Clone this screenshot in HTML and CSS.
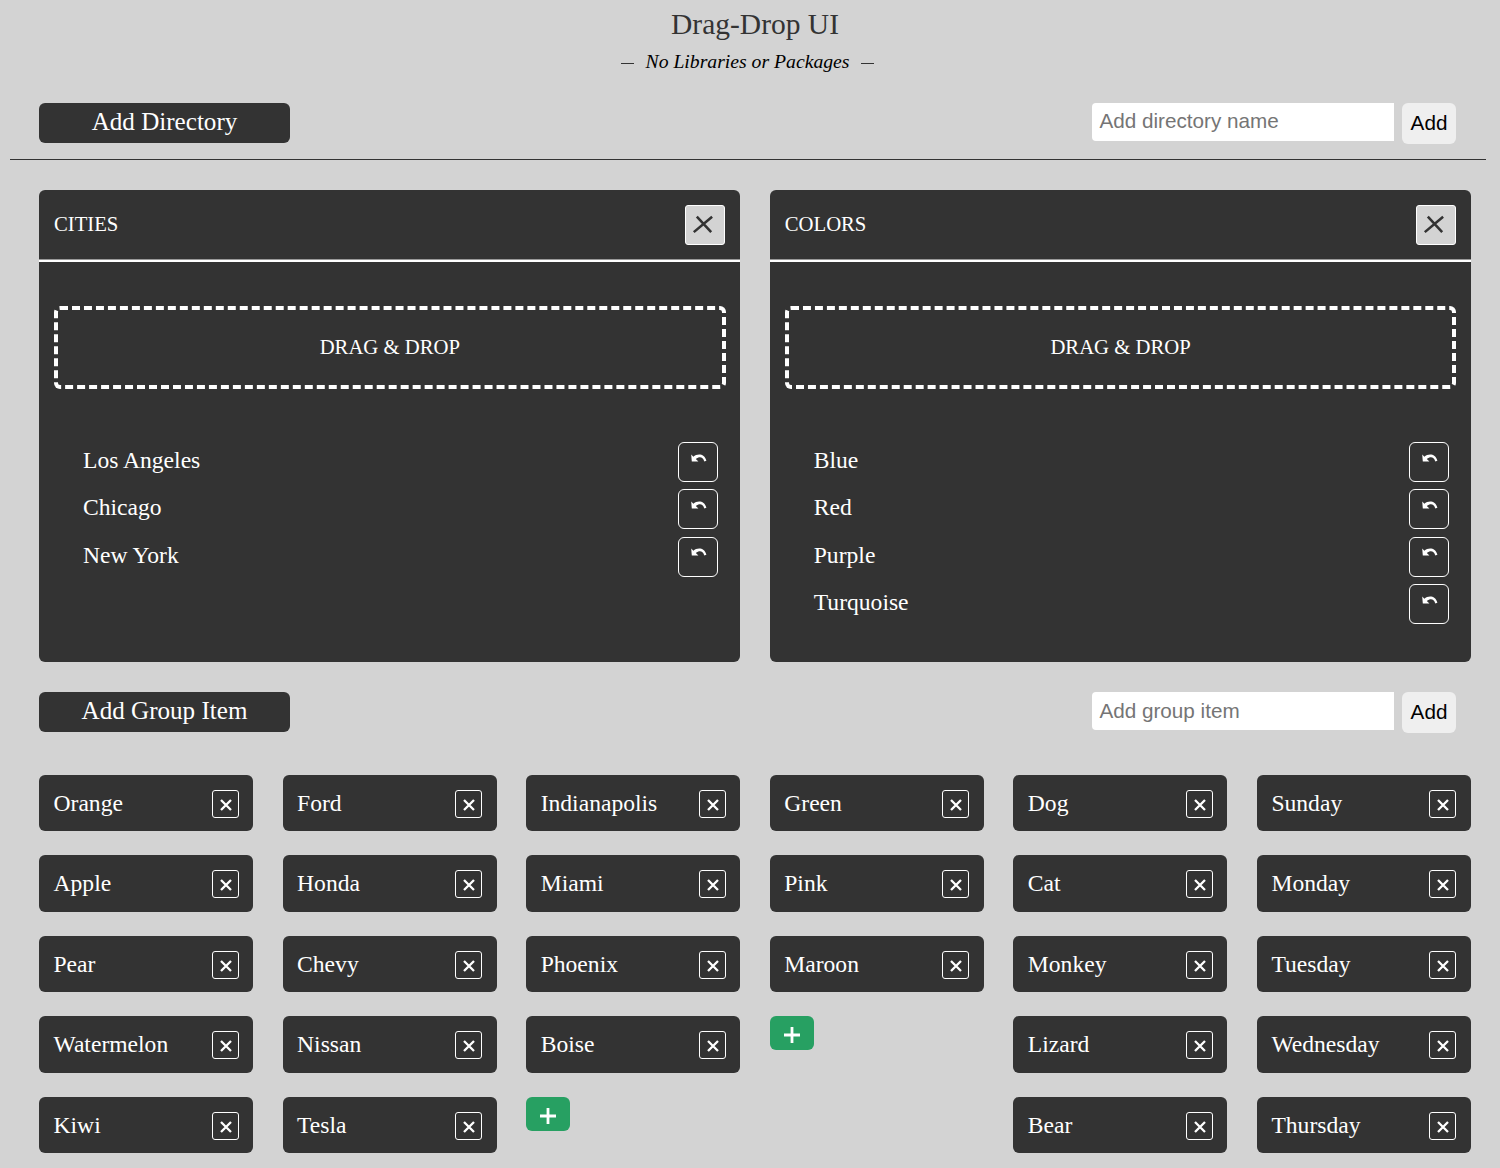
FILE: index.html
```html
<!DOCTYPE html>
<html lang="en">
<head>
<meta charset="utf-8">
<title>Drag-Drop UI</title>
<link rel="stylesheet" href="styles.css">
</head>
<body>
<svg class="symbols" aria-hidden="true">
  <symbol id="close" viewBox="0 0 40 40"><path d="M11.4 11.300 26.500 27.500M27.500 11.300 8.200 27.500"/></symbol>
  <symbol id="times" viewBox="0 0 14 14"><path d="M2 2 12 12M12 2 2 12"/></symbol>
  <symbol id="plus" viewBox="0 0 16 16"><path d="M8 0V16M0 8H16"/></symbol>
  <symbol id="undo" viewBox="0 0 16 8"><path d="M.2 .5 2.400 2.700C6-.6 13.500-1 15.400 6.800L13.300 7.500C11.800 2.700 8.500 2.200 4.800 4.900L7.400 7.600 .8 7.500Z"/></symbol>
</svg>
<header class="header">
  <h1 class="title">Drag-Drop UI</h1>
  <p class="subtitle"><span class="dash"></span><em>No Libraries or Packages</em><span class="dash"></span></p>
</header>
<section class="toolbar toolbar-directory">
  <h2 class="label">Add Directory</h2>
  <form class="form"><input class="field" type="text" placeholder="Add directory name"><button class="add" type="button">Add</button></form>
</section>
<main class="directories">
  <section class="directory">
    <header class="directory-head"><h3 class="caps">CITIES</h3><button class="close" type="button"><svg><use href="#close"/></svg></button></header>
    <div class="drop caps">DRAG &amp; DROP</div>
    <ul class="list">
      <li class="entry">Los Angeles<button class="undo" type="button"><svg><use href="#undo"/></svg></button></li>
      <li class="entry">Chicago<button class="undo" type="button"><svg><use href="#undo"/></svg></button></li>
      <li class="entry">New York<button class="undo" type="button"><svg><use href="#undo"/></svg></button></li>
    </ul>
  </section>
  <section class="directory">
    <header class="directory-head"><h3 class="caps">COLORS</h3><button class="close" type="button"><svg><use href="#close"/></svg></button></header>
    <div class="drop caps">DRAG &amp; DROP</div>
    <ul class="list">
      <li class="entry">Blue<button class="undo" type="button"><svg><use href="#undo"/></svg></button></li>
      <li class="entry">Red<button class="undo" type="button"><svg><use href="#undo"/></svg></button></li>
      <li class="entry">Purple<button class="undo" type="button"><svg><use href="#undo"/></svg></button></li>
      <li class="entry">Turquoise<button class="undo" type="button"><svg><use href="#undo"/></svg></button></li>
    </ul>
  </section>
</main>
<section class="toolbar toolbar-group">
  <h2 class="label">Add Group Item</h2>
  <form class="form"><input class="field" type="text" placeholder="Add group item"><button class="add" type="button">Add</button></form>
</section>
<section class="groups">
  <div class="group">
    <div class="item">Orange<button class="remove" type="button"><svg><use href="#times"/></svg></button></div>
    <div class="item">Apple<button class="remove" type="button"><svg><use href="#times"/></svg></button></div>
    <div class="item">Pear<button class="remove" type="button"><svg><use href="#times"/></svg></button></div>
    <div class="item">Watermelon<button class="remove" type="button"><svg><use href="#times"/></svg></button></div>
    <div class="item">Kiwi<button class="remove" type="button"><svg><use href="#times"/></svg></button></div>
  </div>
  <div class="group">
    <div class="item">Ford<button class="remove" type="button"><svg><use href="#times"/></svg></button></div>
    <div class="item">Honda<button class="remove" type="button"><svg><use href="#times"/></svg></button></div>
    <div class="item">Chevy<button class="remove" type="button"><svg><use href="#times"/></svg></button></div>
    <div class="item">Nissan<button class="remove" type="button"><svg><use href="#times"/></svg></button></div>
    <div class="item">Tesla<button class="remove" type="button"><svg><use href="#times"/></svg></button></div>
  </div>
  <div class="group">
    <div class="item">Indianapolis<button class="remove" type="button"><svg><use href="#times"/></svg></button></div>
    <div class="item">Miami<button class="remove" type="button"><svg><use href="#times"/></svg></button></div>
    <div class="item">Phoenix<button class="remove" type="button"><svg><use href="#times"/></svg></button></div>
    <div class="item">Boise<button class="remove" type="button"><svg><use href="#times"/></svg></button></div>
    <button class="plus" type="button"><svg><use href="#plus"/></svg></button>
  </div>
  <div class="group">
    <div class="item">Green<button class="remove" type="button"><svg><use href="#times"/></svg></button></div>
    <div class="item">Pink<button class="remove" type="button"><svg><use href="#times"/></svg></button></div>
    <div class="item">Maroon<button class="remove" type="button"><svg><use href="#times"/></svg></button></div>
    <button class="plus" type="button"><svg><use href="#plus"/></svg></button>
  </div>
  <div class="group">
    <div class="item">Dog<button class="remove" type="button"><svg><use href="#times"/></svg></button></div>
    <div class="item">Cat<button class="remove" type="button"><svg><use href="#times"/></svg></button></div>
    <div class="item">Monkey<button class="remove" type="button"><svg><use href="#times"/></svg></button></div>
    <div class="item">Lizard<button class="remove" type="button"><svg><use href="#times"/></svg></button></div>
    <div class="item">Bear<button class="remove" type="button"><svg><use href="#times"/></svg></button></div>
  </div>
  <div class="group">
    <div class="item">Sunday<button class="remove" type="button"><svg><use href="#times"/></svg></button></div>
    <div class="item">Monday<button class="remove" type="button"><svg><use href="#times"/></svg></button></div>
    <div class="item">Tuesday<button class="remove" type="button"><svg><use href="#times"/></svg></button></div>
    <div class="item">Wednesday<button class="remove" type="button"><svg><use href="#times"/></svg></button></div>
    <div class="item">Thursday<button class="remove" type="button"><svg><use href="#times"/></svg></button></div>
  </div>
</section>
</body>
</html>
```
FILE: styles.css
```css
* { box-sizing: border-box; }

body {
  margin: 0;
  padding: 8px 14px 0 10px;
  height: 1168px;
  overflow: hidden;
  background: #d3d3d3;
  color: #333;
  font-family: "Liberation Serif", "Times New Roman", serif;
  font-size: 23.6px;
}

h1, h2, h3, p, ul { margin: 0; padding: 0; font-weight: normal; }
button { padding: 0; border: 0; font: inherit; }
svg { display: block; overflow: visible; fill: none; stroke: currentColor; }
.symbols { display: none; }

.header {
  height: 94px;
  padding-left: 14px;
  text-align: center;
}
.title { font-size: 29.5px; line-height: 32px; }
.subtitle {
  display: flex;
  justify-content: center;
  align-items: center;
  gap: 11.500px;
  margin-top: 10px;
  padding-right: 15px;
  color: #000;
  font-size: 19.7px;
  line-height: 22px;
}
.dash {
  width: 13.500px;
  height: 1px;
  margin-top: 4px;
  background: #333;
}

.toolbar {
  display: flex;
  justify-content: space-between;
  align-items: flex-start;
  padding: 0 30px 0 29px;
}
.toolbar-directory { height: 58px; border-bottom: 1.5px solid #333; }
.toolbar-group { height: 82.500px; }
.label {
  width: 251px;
  height: 40px;
  margin-top: .5px;
  border-radius: 6px;
  background: #333;
  color: #fff;
  font-size: 25.1px;
  line-height: 37.500px;
  text-align: center;
}
.form { display: flex; align-items: flex-start; gap: 8px; }
.field, .add { font-family: "Liberation Sans", Arial, sans-serif; font-size: 20.7px; }
.field {
  width: 302px;
  height: 38px;
  margin-top: .7px;
  padding: 0 7.400px;
  border: 0;
  border-radius: 4px 0 0 4px;
  background: #fff;
}
.field::placeholder { color: #757575; }
.add {
  width: 54px;
  height: 41px;
  margin-top: .8px;
  border-radius: 6px;
  background: #efefef;
  color: #000;
}
.toolbar-group .label,
.toolbar-group .field,
.toolbar-group .add { margin-top: 0; }
.toolbar-group .add { padding-bottom: 1px; }
.toolbar-directory .field { padding-bottom: 1px; }

.directories {
  display: grid;
  grid-template-columns: 1fr 1fr;
  gap: 29.500px;
  padding: 30px 15px 30px 29px;
}
.directory {
  height: 472px;
  border-radius: 6px;
  background: #333;
  color: #fff;
}
.directory-head {
  display: flex;
  justify-content: space-between;
  align-items: center;
  height: 72px;
  padding: 0 15px;
  border-bottom: 2px solid #fff;
  box-shadow: inset 0 -1px #999;
}
.caps { font-size: 20.700px; line-height: 24px; }
.directory-head .caps { padding-bottom: 3px; }
.close {
  width: 40px;
  height: 40px;
  margin-bottom: 1px;
  border: 1.500px solid #fff;
  border-radius: 3px;
  background: #d3d3d3;
  color: #333;
}
.close svg { width: 38px; height: 38px; stroke-width: 2.700px; }
.drop {
  display: flex;
  justify-content: center;
  align-items: center;
  height: 83px;
  margin: 44px 14.700px 53px 15px;
  padding-bottom: 1px;
  border: 4px dashed #fff;
  border-radius: 6px;
}
.list { list-style: none; padding: 0 22px 0 44px; }
.entry {
  display: flex;
  justify-content: space-between;
  height: 47.300px;
  line-height: 37px;
}
.undo {
  display: flex;
  justify-content: center;
  width: 40px;
  height: 40px;
  padding: 10.700px 0 0 1px;
  border: 1.500px solid #fff;
  border-radius: 6px;
  background: transparent;
  color: #fff;
}
.undo svg { width: 16px; height: 8px; fill: currentColor; stroke: none; }

.groups {
  display: grid;
  grid-template-columns: repeat(6, 1fr);
  gap: 29.500px;
  padding: 0 15px 0 29px;
}
.group {
  display: flex;
  flex-direction: column;
  align-items: flex-start;
  gap: 24px;
}
.item {
  display: flex;
  justify-content: space-between;
  width: 100%;
  height: 56.500px;
  padding: 15px 14.500px;
  border-radius: 6px;
  background: #333;
  color: #fff;
  line-height: 27px;
}
.remove {
  display: flex;
  justify-content: center;
  align-items: center;
  width: 27px;
  height: 28px;
  padding: 2px 0 0 1px;
  border: 1.500px solid #fff;
  border-radius: 3px;
  background: transparent;
  color: #fff;
}
.remove svg { width: 14px; height: 14px; stroke-width: 2.300px; }
.plus {
  display: flex;
  justify-content: center;
  align-items: center;
  width: 44.300px;
  height: 34px;
  padding-top: 4px;
  border-radius: 6px;
  background: #27a062;
  color: #fff;
}
.plus svg { width: 16px; height: 16px; stroke-width: 2.800px; }
```
